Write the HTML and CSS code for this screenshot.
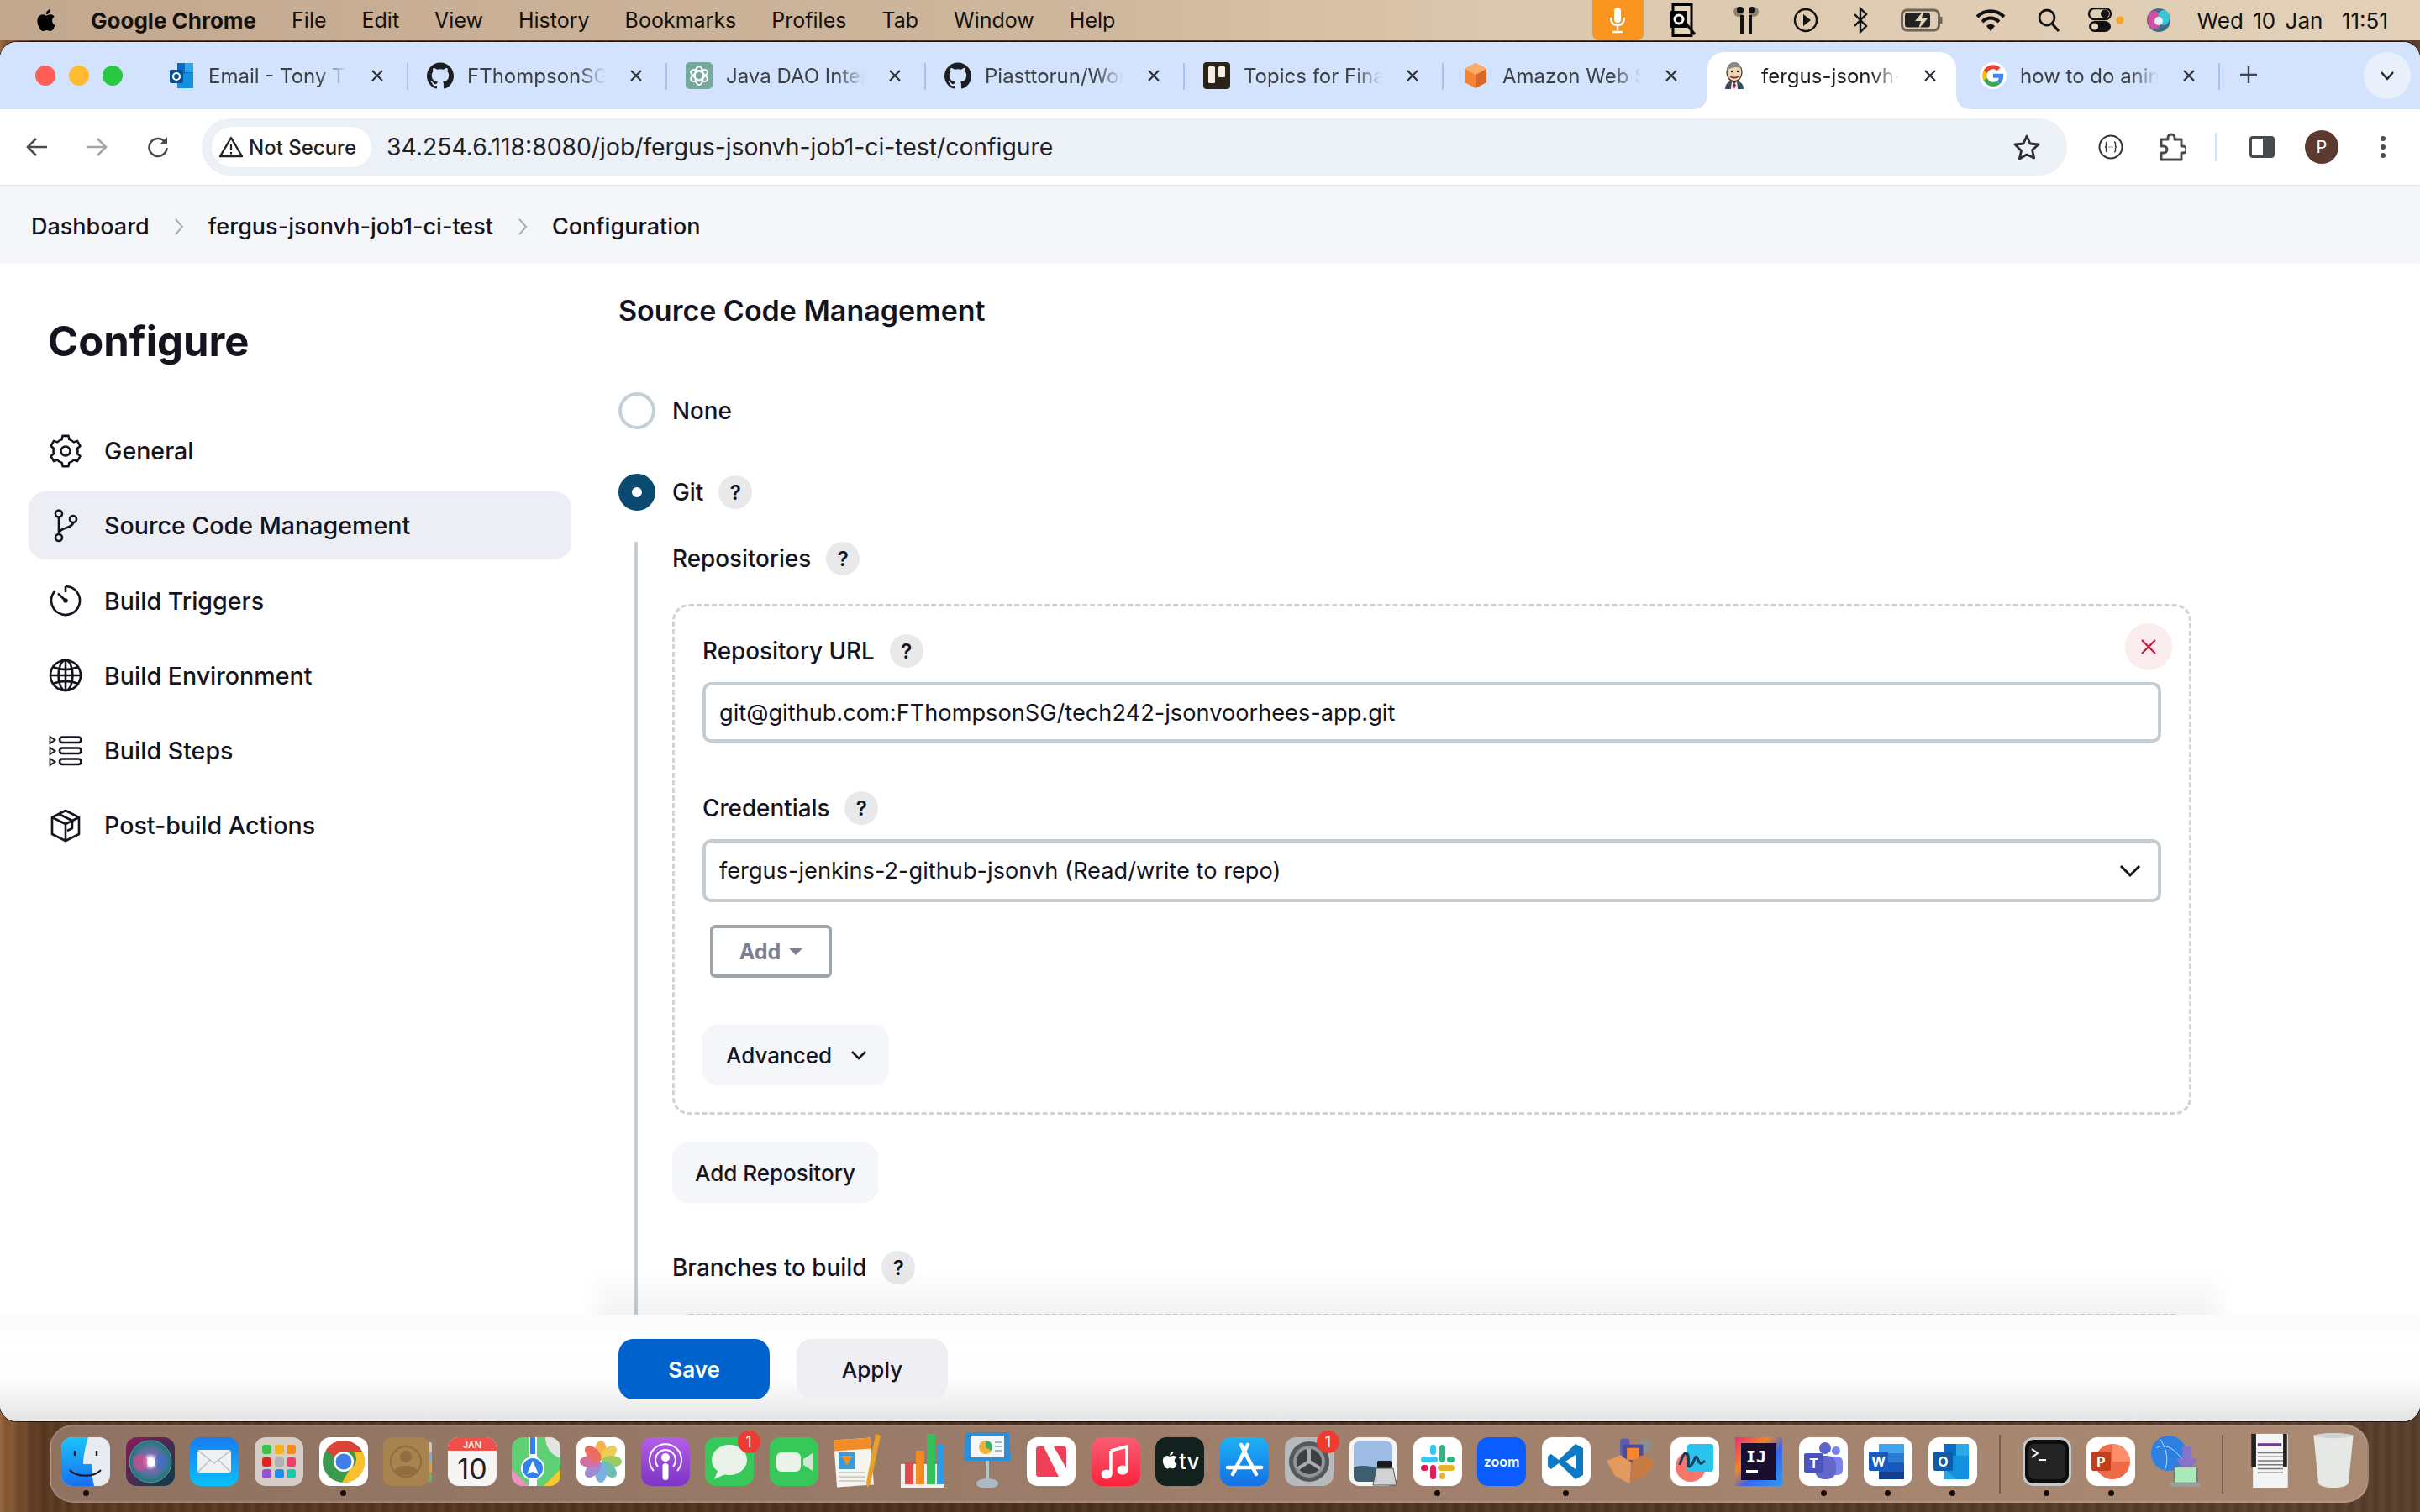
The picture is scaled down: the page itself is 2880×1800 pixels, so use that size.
FILE: index.html
```html
<!DOCTYPE html>
<html lang="en">
<head>
  <meta charset="UTF-8" />
  <meta name="viewport" content="width=device-width, initial-scale=1" />
  <title>fergus-jsonvh-job1-ci-test Config [Jenkins]</title>
  <link rel="stylesheet" href="styles.css">
</head>
<body>

<svg class="sprites" aria-hidden="true">
  <symbol id="github" viewBox="0 0 24 24"><path d="M12 .297c-6.63 0-12 5.373-12 12 0 5.303 3.438 9.8 8.205 11.385.6.113.82-.258.82-.577 0-.285-.01-1.04-.015-2.04-3.338.724-4.042-1.61-4.042-1.61C4.422 18.07 3.633 17.7 3.633 17.7c-1.087-.744.084-.729.084-.729 1.205.084 1.838 1.236 1.838 1.236 1.07 1.835 2.809 1.305 3.495.998.108-.776.417-1.305.76-1.605-2.665-.3-5.466-1.332-5.466-5.93 0-1.31.465-2.38 1.235-3.22-.135-.303-.54-1.523.105-3.176 0 0 1.005-.322 3.3 1.23.96-.267 1.98-.399 3-.405 1.02.006 2.04.138 3 .405 2.28-1.552 3.285-1.23 3.285-1.23.645 1.653.24 2.873.12 3.176.765.84 1.23 1.91 1.23 3.22 0 4.61-2.805 5.625-5.475 5.92.42.36.81 1.096.81 2.22 0 1.606-.015 2.896-.015 3.286 0 .315.21.69.825.57C20.565 22.092 24 17.592 24 12.297c0-6.627-5.373-12-12-12" fill="#1b1f24"/></symbol>
  <symbol id="x" viewBox="0 0 20 20"><path d="M4 4l12 12M16 4L4 16" fill="none" stroke="#2b2f36" stroke-width="2.2"/></symbol>
  <symbol id="crumb" viewBox="0 0 12 22"><path d="M2 2l8 9-8 9" fill="none" stroke="#a9acbb" stroke-width="2"/></symbol>
</svg>

<!-- macos menu bar -->
<div class="menubar">
  <div class="menu-left">
    <svg class="apple" viewBox="0 0 24 24"><path d="M12.152 6.896c-.948 0-2.415-1.078-3.96-1.04-2.04.027-3.91 1.183-4.961 3.014-2.117 3.675-.546 9.103 1.519 12.09 1.013 1.454 2.208 3.09 3.792 3.039 1.52-.065 2.09-.987 3.935-.987 1.831 0 2.35.987 3.96.948 1.637-.026 2.676-1.48 3.676-2.948 1.156-1.688 1.636-3.325 1.662-3.415-.039-.013-3.182-1.221-3.22-4.857-.026-3.04 2.48-4.494 2.597-4.559-1.429-2.09-3.623-2.324-4.39-2.376-2-.156-3.675 1.09-4.61 1.09zM15.53 3.83c.843-1.012 1.4-2.427 1.245-3.83-1.207.052-2.662.805-3.532 1.818-.78.896-1.454 2.338-1.273 3.714 1.338.104 2.715-.688 3.559-1.701"/></svg>
    <span class="menu-app">Google Chrome</span>
    <span>File</span><span>Edit</span><span>View</span><span>History</span><span>Bookmarks</span><span>Profiles</span><span>Tab</span><span>Window</span><span>Help</span>
  </div>
  <div class="menu-right">
    <div class="st st-mic"><svg width="20" height="32" viewBox="0 0 20 32"><rect x="6" y="1" width="8" height="18" rx="4" fill="#fff"/><path d="M2 13c0 6 3 9 8 9s8-3 8-9M10 22v6M4 30h12" fill="none" stroke="#fff" stroke-width="2.4"/></svg></div>
    <div class="st st-outlook"><svg width="34" height="40" viewBox="0 0 34 40"><rect x="5" y="1.500" width="22" height="37" fill="#e6d4bd" stroke="#000" stroke-width="3"/><rect x="2" y="9" width="20" height="20" fill="#000"/><circle cx="12" cy="19" r="5" fill="none" stroke="#fff" stroke-width="3"/><path d="M19 22l12 15" stroke="#000" stroke-width="3"/></svg></div>
    <div class="st st-pods"><svg width="40" height="36" viewBox="0 0 40 36"><circle cx="11" cy="8" r="6" fill="#8a8072"/><circle cx="29" cy="8" r="6" fill="#8a8072"/><circle cx="13" cy="6" r="4" fill="#111"/><circle cx="27" cy="6" r="4" fill="#111"/><path d="M15 12v22M25 12v22" stroke="#111" stroke-width="4"/></svg></div>
    <div class="st st-play"><svg width="30" height="30" viewBox="0 0 30 30"><circle cx="15" cy="15" r="13" fill="none" stroke="#111" stroke-width="2.4"/><path d="M12 8l9 7-9 7z" fill="#111"/></svg></div>
    <div class="st st-bt"><svg width="20" height="32" viewBox="0 0 20 32"><path d="M3 9l14 14-7 7V2l7 7L3 23" fill="none" stroke="#111" stroke-width="2.4"/></svg></div>
    <div class="st st-batt"><svg width="52" height="28" viewBox="0 0 52 28"><rect x="1.500" y="2" width="44" height="24" rx="6" fill="none" stroke="#6c6456" stroke-width="3"/><rect x="5" y="5.500" width="30" height="17" rx="3" fill="#222"/><path d="M48 10v8" stroke="#6c6456" stroke-width="3"/><path d="M27 3L17 15h7l-3 10 11-13h-7z" fill="#e6d4bd"/></svg></div>
    <div class="st st-wifi"><svg width="36" height="28" viewBox="0 0 36 28"><path d="M2 10c9-9 23-9 32 0M8 16c6-6 14-6 20 0" fill="none" stroke="#111" stroke-width="4"/><path d="M13 21c3-3 7-3 10 0l-5 6z" fill="#111"/></svg></div>
    <div class="st st-search"><svg width="28" height="30" viewBox="0 0 28 30"><circle cx="12" cy="12" r="9" fill="none" stroke="#111" stroke-width="2.800"/><path d="M18 19l8 9" stroke="#111" stroke-width="3"/></svg></div>
    <div class="st st-cc"><svg width="44" height="30" viewBox="0 0 44 30"><rect x="2" y="1" width="26" height="13" rx="6.500" fill="none" stroke="#111" stroke-width="2.400"/><circle cx="21" cy="7.500" r="5" fill="#111"/><rect x="2" y="16" width="26" height="13" rx="6.500" fill="#111"/><circle cx="9" cy="22.500" r="4" fill="#e6d4bd"/><circle cx="39" cy="15" r="4.500" fill="#f5a623"/></svg></div>
    <div class="st st-siri"><svg width="30" height="30" viewBox="0 0 30 30"><circle cx="15" cy="15" r="14" fill="#3d6d8a"/><ellipse cx="10" cy="15" rx="8" ry="11" fill="#d14fa5"/><ellipse cx="21" cy="12" rx="7" ry="9" fill="#3bc6d8"/><circle cx="15" cy="16" r="5" fill="#e8eaf5"/></svg></div>
    <span class="clock">Wed 10 Jan&nbsp; 11:51</span>
  </div>
</div>

<div class="window">

  <!-- tabs -->
  <div class="tabstrip">
    <div class="lights"><i class="red"></i><i class="yellow"></i><i class="green"></i></div>
    <div class="tab">
      <svg class="favicon" viewBox="0 0 32 32"><path d="M11 1h19v28H11z" fill="#0a6cc4"/><path d="M20 1h10v11H20z" fill="#29a8ea"/><path d="M11 15l19-3v19H11z" fill="#1490df"/><rect x="2" y="9" width="16" height="16" rx="2" fill="#0b4f93"/><circle cx="10" cy="17" r="4" fill="none" stroke="#fff" stroke-width="2.200"/></svg>
      <span class="tab-title">Email - Tony T</span>
      <svg class="tab-x"><use href="#x"/></svg>
    </div>
    <div class="tab">
      <svg class="favicon"><use href="#github"/></svg>
      <span class="tab-title">FThompsonSG</span>
      <svg class="tab-x"><use href="#x"/></svg>
    </div>
    <div class="tab">
      <svg class="favicon" viewBox="0 0 32 32"><rect width="32" height="32" rx="5" fill="#74aa9c"/><g fill="none" stroke="#fff" stroke-width="1.800"><ellipse cx="16" cy="16" rx="5" ry="11"/><ellipse cx="16" cy="16" rx="5" ry="11" transform="rotate(60 16 16)"/><ellipse cx="16" cy="16" rx="5" ry="11" transform="rotate(120 16 16)"/></g></svg>
      <span class="tab-title">Java DAO Inter</span>
      <svg class="tab-x"><use href="#x"/></svg>
    </div>
    <div class="tab">
      <svg class="favicon"><use href="#github"/></svg>
      <span class="tab-title">Piasttorun/Wor</span>
      <svg class="tab-x"><use href="#x"/></svg>
    </div>
    <div class="tab">
      <svg class="favicon" viewBox="0 0 32 32"><rect width="32" height="32" rx="4" fill="#2c2418"/><rect x="6" y="5" width="8" height="20" rx="1.500" fill="#f3efe6"/><rect x="18" y="5" width="8" height="13" rx="1.500" fill="#f3efe6"/></svg>
      <span class="tab-title">Topics for Fina</span>
      <svg class="tab-x"><use href="#x"/></svg>
    </div>
    <div class="tab">
      <svg class="favicon" viewBox="0 0 32 32"><path d="M16 1l13 7v16l-13 7-13-7V8z" fill="#f58536"/><path d="M16 15l13-7v16l-13 7z" fill="#d9672a"/><path d="M16 1l13 7-13 7-13-7z" fill="#fbab6a"/></svg>
      <span class="tab-title">Amazon Web S</span>
      <svg class="tab-x"><use href="#x"/></svg>
    </div>
    <div class="tab active">
      <svg class="favicon" viewBox="0 0 32 32"><path d="M5 32c0-7 5-10 11-10s11 3 11 10z" fill="#3b4a63"/><path d="M13 23l3 3 3-3 1 9h-8z" fill="#fff"/><path d="M16 25l2 2-2 5-2-5z" fill="#a6212f"/><ellipse cx="16" cy="12" rx="9" ry="11" fill="#f0d6b7" stroke="#4b3a30" stroke-width="1.300"/><path d="M7 10c1-7 5-10 9-10s8 3 9 8c-5-3-12-3-18 2z" fill="#8c8a86"/><circle cx="13" cy="11" r="1.200" fill="#222"/><circle cx="20" cy="11" r="1.200" fill="#222"/><path d="M11 17c3 2 7 2 10 0" fill="none" stroke="#7a2a22" stroke-width="1.600"/></svg>
      <span class="tab-title">fergus-jsonvh-</span>
      <svg class="tab-x"><use href="#x"/></svg>
    </div>
    <div class="tab last">
      <svg class="favicon" viewBox="-6 -6 60 60"><circle cx="24" cy="24" r="30" fill="#fff"/><path fill="#EA4335" d="M24 9.500c3.540 0 6.710 1.220 9.210 3.600l6.850-6.850C35.900 2.380 30.470 0 24 0 14.620 0 6.510 5.380 2.560 13.220l7.980 6.190C12.430 13.720 17.740 9.500 24 9.500z"/><path fill="#4285F4" d="M46.980 24.550c0-1.570-.15-3.090-.38-4.550H24v9.020h12.940c-.58 2.960-2.260 5.480-4.780 7.180l7.730 6c4.510-4.180 7.090-10.360 7.090-17.650z"/><path fill="#FBBC05" d="M10.530 28.590c-.48-1.450-.76-2.990-.76-4.590s.27-3.140.76-4.590l-7.980-6.190C.92 16.460 0 20.120 0 24c0 3.880.92 7.540 2.560 10.780l7.970-6.190z"/><path fill="#34A853" d="M24 48c6.480 0 11.930-2.130 15.890-5.810l-7.730-6c-2.150 1.450-4.920 2.300-8.160 2.300-6.260 0-11.570-4.220-13.460-9.910l-7.980 6.190C6.510 42.620 14.620 48 24 48z"/></svg>
      <span class="tab-title">how to do anin</span>
      <svg class="tab-x"><use href="#x"/></svg>
    </div>
    <svg class="newtab" viewBox="0 0 22 22"><path d="M11 1v20M1 11h20" stroke="#3c4650" stroke-width="2.400"/></svg>
    <div class="tabsearch"><svg width="18" height="12" viewBox="0 0 18 12"><path d="M2 2l7 8 7-8" fill="none" stroke="#1f2328" stroke-width="2.400"/></svg></div>
  </div>

  <!-- toolbar -->
  <div class="toolbar">
    <div class="tool t-back"><svg width="26" height="24" viewBox="0 0 26 24"><path d="M25 12H3M12 2L2 12l10 10" fill="none" stroke="#474b50" stroke-width="2.600"/></svg></div>
    <div class="tool t-fwd"><svg width="26" height="24" viewBox="0 0 26 24"><path d="M1 12h22M14 2l10 10-10 10" fill="none" stroke="#a2a5a9" stroke-width="2.600"/></svg></div>
    <div class="tool t-reload"><svg width="26" height="26" viewBox="0 0 26 26"><path d="M22 8a10.500 10.500 0 1 0 1.500 6" fill="none" stroke="#474b50" stroke-width="2.600"/><path d="M24 1v9h-9z" fill="#474b50"/></svg></div>
    <div class="omnibox">
      <div class="chip">
        <svg width="30" height="26" viewBox="0 0 30 26"><path d="M15 2L2 24h26z" fill="none" stroke="#1f2328" stroke-width="2.400" stroke-linejoin="round"/><path d="M15 10v7M15 19v2.500" stroke="#1f2328" stroke-width="2.200"/></svg>
        <span>Not Secure</span>
      </div>
      <span class="url">34.254.6.118:8080/job/fergus-jsonvh-job1-ci-test/configure</span>
      <svg class="star" viewBox="0 0 32 32"><path d="M16 3l4 9 10 1-7.500 6.500 2.200 9.500L16 25l-8.700 5 2.200-9.500L2 13l10-1z" fill="none" stroke="#2b2f36" stroke-width="2.800" stroke-linejoin="round"/></svg>
    </div>
    <div class="tool-right">
      <div class="tool t-json"><svg width="30" height="30" viewBox="0 0 30 30"><circle cx="15" cy="15" r="13.500" fill="none" stroke="#333" stroke-width="2"/><path d="M11 9c-2 0-1.500 2-1.500 4s-1 2-1.500 2c.500 0 1.500 0 1.500 2s-.5 4 1.500 4M19 9c2 0 1.500 2 1.500 4s1 2 1.500 2c-.5 0-1.500 0-1.500 2s.5 4-1.500 4" fill="none" stroke="#333" stroke-width="1.400"/><path d="M12.500 15h1M14.500 15h1M16.500 15h1" stroke="#333" stroke-width="1.200"/></svg></div>
      <div class="tool t-ext"><svg width="34" height="34" viewBox="0 0 34 34"><path d="M4 8h8V6a4 4 0 0 1 8 0v2h8v8h2a4 4 0 0 1 0 8h-2v8H4v-8h3a4 4 0 0 0 0-8H4z" fill="none" stroke="#474b50" stroke-width="3" stroke-linejoin="round"/></svg></div>
      <div class="tool t-sep"><i></i></div>
      <div class="tool t-side"><svg width="30" height="26" viewBox="0 0 30 26"><rect x="1.500" y="1.500" width="27" height="23" rx="2.500" fill="none" stroke="#474b50" stroke-width="3"/><rect x="16" y="1.500" width="12.500" height="23" fill="#474b50"/></svg></div>
      <div class="tool t-avatar"><span class="avatar">P</span></div>
      <div class="tool t-more"><svg width="8" height="28" viewBox="0 0 8 28"><circle cx="4" cy="4" r="3" fill="#474b50"/><circle cx="4" cy="14" r="3" fill="#474b50"/><circle cx="4" cy="24" r="3" fill="#474b50"/></svg></div>
    </div>
  </div>

  <!-- jenkins breadcrumb -->
  <div class="breadcrumb">
    <span>Dashboard</span>
    <svg class="crumb-sep"><use href="#crumb"/></svg>
    <span>fergus-jsonvh-job1-ci-test</span>
    <svg class="crumb-sep"><use href="#crumb"/></svg>
    <span>Configuration</span>
  </div>

  <div class="page">
    <aside class="sidebar">
      <h1>Configure</h1>
      <nav class="side-nav">
        <a class="side-item">
          <svg class="side-icon" viewBox="0 0 40 40"><path d="M15.760 6.130L16.470 1.840H23.530L24.240 6.130A14.500 14.500 0 0 1 29.890 9.400L33.960 7.860 37.490 13.980 34.130 16.740A14.500 14.500 0 0 1 34.130 23.260L37.490 26.020 33.960 32.140 29.890 30.600A14.500 14.500 0 0 1 24.240 33.870L23.530 38.160H16.470L15.760 33.870A14.500 14.500 0 0 1 10.110 30.600L6.040 32.140 2.510 26.020 5.870 23.260A14.500 14.500 0 0 1 5.870 16.740L2.510 13.980 6.040 7.860 10.110 9.400A14.500 14.500 0 0 1 15.760 6.130Z" stroke-linejoin="round"/><circle cx="20" cy="20" r="5.500"/></svg>
          General
        </a>
        <a class="side-item current">
          <svg class="side-icon" viewBox="0 0 40 40"><circle cx="12" cy="5.500" r="4"/><circle cx="12" cy="34" r="4"/><circle cx="29" cy="12" r="4"/><path d="M12 9.500V30M29 16c0 7-17 6-17 13"/></svg>
          Source Code Management
        </a>
        <a class="side-item">
          <svg class="side-icon" viewBox="0 0 40 40"><path d="M20 3a17 17 0 1 1-12.500 5.500"/><path d="M20 3v7M20.500 20.500L11 11.500"/><circle cx="20" cy="20" r="1.500"/></svg>
          Build Triggers
        </a>
        <a class="side-item">
          <svg class="side-icon" viewBox="0 0 40 40"><circle cx="20" cy="20" r="18"/><ellipse cx="20" cy="20" rx="8.500" ry="18"/><path d="M20 2v36M2 20h36M5 10c9 4 21 4 30 0M5 30c9-4 21-4 30 0"/></svg>
          Build Environment
        </a>
        <a class="side-item">
          <svg class="side-icon" viewBox="0 0 40 40"><path d="M1.500 3l6 4-6 4zM1.500 16l6 4-6 4zM1.500 29l6 4-6 4z" stroke-width="1.800"/><rect x="13" y="3.500" width="25.500" height="6.500" rx="3.200"/><rect x="13" y="16.500" width="25.500" height="6.500" rx="3.200"/><rect x="13" y="29.500" width="25.500" height="6.500" rx="3.200"/></svg>
          Build Steps
        </a>
        <a class="side-item">
          <svg class="side-icon" viewBox="0 0 40 40"><path d="M20 2l16 8v20l-16 8-16-8V10zM4 10l16 8 16-8M20 18v20M12 6l16 8v9l-6 3" stroke-linejoin="round"/></svg>
          Post-build Actions
        </a>
      </nav>
    </aside>

    <main class="config">
      <h2>Source Code Management</h2>

      <label class="radio-row none-row"><span class="radio"></span>None</label>
      <div class="radio-row git-row"><span class="radio checked"></span>Git <span class="help">?</span></div>

      <div class="git-block">
        <div class="field-label repos-label">Repositories <span class="help">?</span></div>

        <div class="repeat-box">
          <button class="remove-btn"><svg width="20" height="20" viewBox="0 0 20 20"><path d="M2 2l16 16M18 2L2 18" stroke="#d4123c" stroke-width="2.200"/></svg></button>

          <div class="field-label">Repository URL <span class="help">?</span></div>
          <input class="text-input" type="text" value="git@github.com:FThompsonSG/tech242-jsonvoorhees-app.git" />

          <div class="field-label cred-label">Credentials <span class="help">?</span></div>
          <div class="select-box">
            <span>fergus-jenkins-2-github-jsonvh (Read/write to repo)</span>
            <svg width="26" height="16" viewBox="0 0 26 16"><path d="M2 2l11 11L24 2" fill="none" stroke="#14141f" stroke-width="3"/></svg>
          </div>
          <button class="add-btn">Add <i class="caret"></i></button>
          <button class="soft-btn advanced-btn">Advanced <svg width="20" height="12" viewBox="0 0 20 12"><path d="M2 2l8 8 8-8" fill="none" stroke="#14141f" stroke-width="2.600"/></svg></button>
        </div>

        <button class="soft-btn add-repo-btn">Add Repository</button>

        <div class="field-label branches-label">Branches to build <span class="help">?</span></div>
        <div class="repeat-box branches-box"></div>
      </div>
    </main>

    <div class="bottom-bar">
      <button class="save-btn">Save</button>
      <button class="apply-btn">Apply</button>
    </div>
  </div>
</div>

<!-- macos dock -->
<div class="dock">
  <div class="slot on"><svg class="app" viewBox="0 0 58 58"><defs><linearGradient id="fing" x1="0" y1="0" x2="0" y2="1"><stop offset="0" stop-color="#19c3fb"/><stop offset="1" stop-color="#1a6ff0"/></linearGradient></defs><rect width="58" height="58" rx="13" fill="#e6ecf2"/><path d="M13 0H32C29 10 26 22 26 32H36C36 41 37 50 39 58H13A13 13 0 0 1 0 45V13A13 13 0 0 1 13 0z" fill="url(#fing)"/><path d="M16 16v6M42 16v6" stroke="#1a1a2a" stroke-width="2.400"/><path d="M10 39C18 48 39 48 47 39" fill="none" stroke="#1a1a2a" stroke-width="2"/></svg></div>
  <div class="slot"><svg class="app" viewBox="0 0 58 58"><defs><radialGradient id="sirig"><stop offset="0" stop-color="#fff"/><stop offset=".18" stop-color="#f4f0ff"/><stop offset=".4" stop-color="#7d6bb0"/><stop offset="1" stop-color="#1c7a7a"/></radialGradient><linearGradient id="sirib" x1="0" y1="0" x2="1" y2="1"><stop offset="0" stop-color="#8a1a5c"/><stop offset="1" stop-color="#0a3c48"/></linearGradient></defs><rect width="58" height="58" rx="13" fill="url(#sirib)"/><circle cx="29" cy="29" r="25" fill="url(#sirig)" stroke="#4aa2a2"/><ellipse cx="17" cy="30" rx="9" ry="10" fill="#d24a8c" opacity=".7"/><ellipse cx="42" cy="29" rx="8" ry="9" fill="#3f6dc4" opacity=".7"/><circle cx="30" cy="30" r="5" fill="#fff"/></svg></div>
  <div class="slot"><svg class="app" viewBox="0 0 58 58"><defs><linearGradient id="mailg" x1="0" y1="0" x2="0" y2="1"><stop offset="0" stop-color="#1a7bf0"/><stop offset="1" stop-color="#0ac0fb"/></linearGradient></defs><rect width="58" height="58" rx="13" fill="url(#mailg)"/><rect x="9" y="15" width="40" height="27" rx="3" fill="#eef0f2"/><path d="M10 16l19 15 19-15M10 41l14-14M48 41L34 27" fill="none" stroke="#b7bcc4" stroke-width="1.300"/></svg></div>
  <div class="slot"><svg class="app" viewBox="0 0 58 58"><rect width="58" height="58" rx="13" fill="#d6cdc6"/><rect x="9" y="9" width="11" height="11" rx="3" fill="#3ec24a"/><rect x="24" y="9" width="11" height="11" rx="3" fill="#f5b01f"/><rect x="38" y="9" width="11" height="11" rx="3" fill="#f58a1f"/><rect x="9" y="24" width="11" height="11" rx="3" fill="#e0231f"/><rect x="24" y="24" width="11" height="11" rx="3" fill="#a8b3b8"/><rect x="38" y="24" width="11" height="11" rx="3" fill="#ef3d6a"/><rect x="9" y="38" width="11" height="11" rx="3" fill="#9a4fd6"/><rect x="24" y="38" width="11" height="11" rx="3" fill="#1f8ef0"/><rect x="38" y="38" width="11" height="11" rx="3" fill="#1cc8a8"/></svg></div>
  <div class="slot on"><svg class="app" viewBox="0 0 58 58"><rect width="58" height="58" rx="13" fill="#fff"/><circle cx="29" cy="29" r="25" fill="#3a9b4c"/><path d="M29 4a25 25 0 0 1 22 13H29a12 12 0 0 0-11 7L8 15A25 25 0 0 1 29 4z" fill="#db4437"/><path d="M51 17a25 25 0 0 1-24 37l10-17a12 12 0 0 0 3-20z" fill="#fbc02d"/><circle cx="29" cy="29" r="12" fill="#fff"/><circle cx="29" cy="29" r="9.500" fill="#3f7ee8"/></svg></div>
  <div class="slot"><svg class="app" viewBox="0 0 58 58"><rect x="50" y="6" width="8" height="12" rx="2" fill="#c9c8c4"/><rect x="50" y="18" width="8" height="12" fill="#6fb3dc"/><rect x="50" y="30" width="8" height="12" fill="#e59a3b"/><rect x="50" y="42" width="8" height="11" rx="2" fill="#63b56a"/><rect width="55" height="58" rx="10" fill="#a9834f"/><circle cx="27" cy="29" r="18" fill="none" stroke="#8f6d3f" stroke-width="2"/><circle cx="27" cy="23" r="7" fill="#8f6d3f"/><path d="M13 40c4-8 24-8 28 0-6 7-22 7-28 0z" fill="#8f6d3f"/></svg></div>
  <div class="slot"><svg class="app" viewBox="0 0 58 58"><rect width="58" height="58" rx="13" fill="#f6f5f3"/><path d="M0 16V13A13 13 0 0 1 13 0h32a13 13 0 0 1 13 13v3z" fill="#f0504b"/><text class="cal-mon" x="29" y="13" text-anchor="middle">JAN</text><text class="cal-day" x="29" y="50" text-anchor="middle">10</text></svg></div>
  <div class="slot"><svg class="app" viewBox="0 0 58 58"><rect width="58" height="58" rx="13" fill="#5fd073"/><path d="M40 0h5a13 13 0 0 1 13 13v12C48 22 40 12 40 0z" fill="#e4e4e2"/><path d="M0 38l20 20H13A13 13 0 0 1 0 45z" fill="#ef8fc4"/><path d="M38 58l20-20v7a13 13 0 0 1-13 13z" fill="#f7c92f"/><path d="M20 0h10v58H20z" fill="#fafafa"/><path d="M22 0h6v20h-6z" fill="#2f82ea"/><circle cx="25" cy="37" r="13" fill="#2f82ea" stroke="#fff" stroke-width="2"/><path d="M25 28l7 16-7-3-7 3z" fill="#fff"/></svg></div>
  <div class="slot"><svg class="app" viewBox="0 0 58 58"><rect width="58" height="58" rx="13" fill="#fff"/><g opacity=".82"><ellipse cx="29" cy="16" rx="7" ry="12" fill="#f5a02a"/><ellipse cx="29" cy="16" rx="7" ry="12" fill="#e9c22e" transform="rotate(45 29 29)"/><ellipse cx="29" cy="16" rx="7" ry="12" fill="#88bf42" transform="rotate(90 29 29)"/><ellipse cx="29" cy="16" rx="7" ry="12" fill="#4fb3a2" transform="rotate(135 29 29)"/><ellipse cx="29" cy="16" rx="7" ry="12" fill="#5f9fe0" transform="rotate(180 29 29)"/><ellipse cx="29" cy="16" rx="7" ry="12" fill="#8a72c8" transform="rotate(225 29 29)"/><ellipse cx="29" cy="16" rx="7" ry="12" fill="#c9508f" transform="rotate(270 29 29)"/><ellipse cx="29" cy="16" rx="7" ry="12" fill="#ea4c3f" transform="rotate(315 29 29)"/></g></svg></div>
  <div class="slot"><svg class="app" viewBox="0 0 58 58"><defs><linearGradient id="podg" x1="0" y1="0" x2="0" y2="1"><stop offset="0" stop-color="#b45fe8"/><stop offset="1" stop-color="#7c35c4"/></linearGradient></defs><rect width="58" height="58" rx="13" fill="url(#podg)"/><g fill="none" stroke="#fff" stroke-width="2"><path d="M15 40a19 19 0 1 1 28 0"/><path d="M20 35a12 12 0 1 1 18 0"/></g><circle cx="29" cy="24" r="5" fill="#fff"/><rect x="25.500" y="31" width="7" height="20" rx="3.500" fill="#fff"/></svg></div>
  <div class="slot"><svg class="app" viewBox="0 0 58 58"><rect width="58" height="58" rx="13" fill="#36c95a"/><ellipse cx="29" cy="27" rx="21" ry="18" fill="#e9f3e9"/><path d="M16 38l-5 12 13-6z" fill="#e9f3e9"/></svg><span class="badge">1</span></div>
  <div class="slot"><svg class="app" viewBox="0 0 58 58"><rect width="58" height="58" rx="13" fill="#36c95a"/><rect x="8" y="18" width="29" height="23" rx="6" fill="#e9f3e9"/><path d="M40 26l11-7v21l-11-7z" fill="#cfe8cf"/></svg></div>
  <div class="slot"><svg class="app tall" viewBox="0 0 58 68"><rect x="2" y="8" width="44" height="56" fill="#f6f5f0" transform="rotate(-4 24 36)"/><rect x="2" y="8" width="44" height="13" fill="#f28c28" transform="rotate(-4 24 36)"/><rect x="6" y="24" width="20" height="20" fill="#3c9ad8"/><path d="M10 28l6 12 6-12z" fill="#f5901f"/><path d="M6 48h32M6 53h32M6 58h32" stroke="#aaa" stroke-width="1"/><path d="M50 2l6 2-12 58-4 4-1-6z" fill="#e6a12a"/></svg></div>
  <div class="slot"><svg class="app tall" viewBox="0 0 58 68"><path d="M3 38h52v28H3z" fill="#f1f1ef"/><rect x="8" y="36" width="10" height="26" fill="#e64a4a"/><rect x="21" y="22" width="10" height="40" fill="#f58b1f"/><rect x="34" y="2" width="10" height="60" fill="#37c15c"/><rect x="46" y="14" width="9" height="48" fill="#2f9be6"/></svg></div>
  <div class="slot"><svg class="app tall" viewBox="0 0 58 68"><path d="M3 0h52l2 34H1z" fill="#2e8fd8"/><path d="M9 4h40v26H9z" fill="#f3f7fa"/><circle cx="27" cy="18" r="8" fill="#f2b134"/><path d="M27 18V10a8 8 0 0 1 7 12z" fill="#38b36a"/><path d="M38 12h8M38 17h8M38 22h8" stroke="#8aa" stroke-width="1.500"/><rect x="27" y="34" width="4" height="26" fill="#b8c6d0"/><ellipse cx="29" cy="61" rx="13" ry="6" fill="#a9bac6"/></svg></div>
  <div class="slot"><svg class="app" viewBox="0 0 58 58"><rect width="58" height="58" rx="13" fill="#fff"/><rect x="11" y="11" width="36" height="36" rx="3" fill="#ef4056"/><path d="M20 11h12l15 26V47H38z" fill="#fff"/></svg></div>
  <div class="slot"><svg class="app" viewBox="0 0 58 58"><defs><linearGradient id="musg" x1="0" y1="0" x2="0" y2="1"><stop offset="0" stop-color="#fb5c74"/><stop offset="1" stop-color="#fa233b"/></linearGradient></defs><rect width="58" height="58" rx="13" fill="url(#musg)"/><path d="M23 16l19-5v28" fill="none" stroke="#fff" stroke-width="3.500"/><path d="M23 16v28" stroke="#fff" stroke-width="3.500"/><ellipse cx="18" cy="44" rx="6.500" ry="5.500" fill="#fff"/><ellipse cx="37" cy="39" rx="6.500" ry="5.500" fill="#fff"/></svg></div>
  <div class="slot"><svg class="app" viewBox="0 0 58 58"><rect width="58" height="58" rx="13" fill="#13211e"/><path transform="translate(7 17) scale(.85)" fill="#fff" d="M12.152 6.896c-.948 0-2.415-1.078-3.960-1.040-2.040.027-3.910 1.183-4.961 3.014-2.117 3.675-.546 9.103 1.519 12.090 1.013 1.454 2.208 3.090 3.792 3.039 1.520-.065 2.090-.987 3.935-.987 1.831 0 2.350.987 3.960.948 1.637-.026 2.676-1.480 3.676-2.948 1.156-1.688 1.636-3.325 1.662-3.415-.039-.013-3.182-1.221-3.220-4.857-.026-3.040 2.480-4.494 2.597-4.559-1.429-2.090-3.623-2.324-4.390-2.376-2-.156-3.675 1.090-4.610 1.090zM15.530 3.830c.843-1.012 1.400-2.427 1.245-3.830-1.207.052-2.662.805-3.532 1.818-.780.896-1.454 2.338-1.273 3.714 1.338.104 2.715-.688 3.559-1.701"/><text class="tv-label" x="28" y="38">tv</text></svg></div>
  <div class="slot"><svg class="app" viewBox="0 0 58 58"><defs><linearGradient id="appg" x1="0" y1="0" x2="0" y2="1"><stop offset="0" stop-color="#1cb2f5"/><stop offset="1" stop-color="#1470e6"/></linearGradient></defs><rect width="58" height="58" rx="13" fill="url(#appg)"/><path d="M33 9L15 44M25 9l18 35M9 36h40" stroke="#fff" stroke-width="4.500" stroke-linecap="round"/></svg></div>
  <div class="slot"><svg class="app" viewBox="0 0 58 58"><rect width="58" height="58" rx="13" fill="#b6babc"/><circle cx="29" cy="29" r="24" fill="#55595c"/><circle cx="29" cy="29" r="19" fill="#8f9496"/><circle cx="29" cy="29" r="15" fill="#3d4043"/><path d="M29 29V14M29 29l13 8M29 29l-13 8" stroke="#a9adaf" stroke-width="4"/></svg><span class="badge">1</span></div>
  <div class="slot"><svg class="app" viewBox="0 0 58 58"><rect width="58" height="58" rx="13" fill="#f5f4f1"/><rect x="6" y="5" width="46" height="48" rx="6" fill="#9fbce4"/><path d="M6 36c12-5 30 0 46 6v5a6 6 0 0 1-6 6H12a6 6 0 0 1-6-6z" fill="#3f5d70"/><rect x="34" y="28" width="18" height="9" rx="2" fill="#1a1a1a"/><path d="M33 37h20l4 20H29z" fill="#cfd3d4" stroke="#555"/></svg></div>
  <div class="slot on"><svg class="app" viewBox="0 0 58 58"><rect width="58" height="58" rx="13" fill="#fff"/><rect x="9" y="23" width="20" height="7" rx="3.500" fill="#36c5f0"/><rect x="20" y="9" width="7" height="12" rx="3.500" fill="#36c5f0"/><rect x="31" y="9" width="7" height="21" rx="3.500" fill="#2eb67d"/><rect x="40" y="23" width="9" height="7" rx="3.500" fill="#2eb67d"/><rect x="29" y="33" width="20" height="7" rx="3.500" fill="#ecb22e"/><rect x="31" y="42" width="7" height="8" rx="3.500" fill="#ecb22e"/><rect x="20" y="33" width="7" height="17" rx="3.500" fill="#e01e5a"/><rect x="9" y="33" width="9" height="7" rx="3.500" fill="#e01e5a"/></svg></div>
  <div class="slot"><svg class="app" viewBox="0 0 58 58"><rect width="58" height="58" rx="13" fill="#0b5cff"/><text class="zoom-label" x="29" y="35" text-anchor="middle">zoom</text></svg></div>
  <div class="slot on"><svg class="app" viewBox="0 0 58 58"><rect width="58" height="58" rx="13" fill="#fff"/><path d="M40 8l9 5v32l-9 5-20-19-9 7-4-3V23l4-3 9 7zm0 13L28 29l12 9z" fill="#0e7ac4"/></svg></div>
  <div class="slot"><svg class="app tall" viewBox="0 0 72 68"><circle cx="56" cy="12" r="10" fill="#8b8d90"/><rect x="20" y="1" width="14" height="26" rx="5" fill="#5560b0"/><rect x="24" y="10" width="30" height="30" fill="#4e4a9c"/><rect x="30" y="15" width="18" height="18" fill="#f5862a"/><path d="M0 34l20-8 16 10-2 32-22-12z" fill="#e29a5f"/><path d="M72 34l-20-8-16 10 2 30 22-12z" fill="#c77b45"/></svg></div>
  <div class="slot"><svg class="app" viewBox="0 0 58 58"><rect width="58" height="58" rx="13" fill="#fff"/><circle cx="24" cy="35" r="18" fill="#f7756a"/><rect x="20" y="8" width="31" height="33" rx="4" fill="#29c4ee"/><path d="M11 33c4-14 8-18 10-11s-2 16 3 12 5-15 8-9 3 9 9 3" fill="none" stroke="#10405c" stroke-width="3"/></svg></div>
  <div class="slot"><svg class="app" viewBox="0 0 58 58"><defs><linearGradient id="ijg" x1="0" y1="0" x2="1" y2="1"><stop offset="0" stop-color="#f5277a"/><stop offset=".35" stop-color="#f7851c"/><stop offset=".6" stop-color="#3a63f0"/><stop offset="1" stop-color="#2d9bf0"/></linearGradient></defs><rect width="56" height="58" fill="url(#ijg)"/><rect x="7" y="7" width="42" height="44" fill="#1a0f2e"/><text class="ij-label" x="13" y="30">IJ</text><rect x="13" y="39" width="14" height="3" fill="#fff"/></svg></div>
  <div class="slot on"><svg class="app" viewBox="0 0 58 58"><rect width="58" height="58" rx="13" fill="#fff"/><circle cx="44" cy="16" r="5" fill="#7b83eb"/><rect x="36" y="23" width="16" height="22" rx="6" fill="#7b83eb"/><circle cx="31" cy="13" r="7" fill="#5d64c9"/><rect x="19" y="22" width="25" height="28" rx="10" fill="#6268c9"/><rect x="6" y="19" width="23" height="23" rx="2" fill="#4b53bc"/><text class="office-label" x="17.500" y="37" text-anchor="middle">T</text></svg></div>
  <div class="slot on"><svg class="app" viewBox="0 0 58 58"><rect width="58" height="58" rx="13" fill="#fff"/><path d="M18 8h28a2 2 0 0 1 2 2v38a2 2 0 0 1-2 2H18z" fill="#2b7cd3"/><rect x="18" y="8" width="30" height="11" fill="#41a5ee"/><rect x="18" y="30" width="30" height="11" fill="#185abd"/><rect x="18" y="41" width="30" height="9" fill="#103f91"/><rect x="6" y="17" width="23" height="23" rx="2" fill="#185abd"/><text class="office-label" x="17.500" y="35" text-anchor="middle">W</text></svg></div>
  <div class="slot on"><svg class="app" viewBox="0 0 58 58"><rect width="58" height="58" rx="13" fill="#fff"/><rect x="18" y="8" width="30" height="14" fill="#0a6cc4"/><rect x="33" y="8" width="15" height="14" fill="#29a8ea"/><path d="M18 22h30v28H18z" fill="#1490df"/><path d="M18 36l15 14H18z" fill="#28a8ea"/><rect x="6" y="17" width="23" height="23" rx="2" fill="#0f5ba8"/><text class="office-label" x="17.500" y="35" text-anchor="middle">O</text></svg></div>
  <div class="dock-sep"></div>
  <div class="slot on"><svg class="app" viewBox="0 0 58 58"><rect width="58" height="58" rx="13" fill="#c4c8ca"/><rect x="3" y="3" width="52" height="52" rx="10" fill="#0c0c0c"/><rect x="7" y="8" width="44" height="42" rx="6" fill="#242424"/><path d="M11 14l7 5-7 5" fill="none" stroke="#fff" stroke-width="2"/><path d="M20 27h8" stroke="#fff" stroke-width="2"/></svg></div>
  <div class="slot on"><svg class="app" viewBox="0 0 58 58"><rect width="58" height="58" rx="13" fill="#fff"/><circle cx="31" cy="29" r="21" fill="#ed6c47"/><path d="M31 8a21 21 0 0 1 21 21H31z" fill="#ff8f6b"/><rect x="6" y="17" width="23" height="23" rx="2" fill="#c43e1c"/><text class="office-label" x="17.500" y="35" text-anchor="middle">P</text></svg></div>
  <div class="slot"><svg class="app tall" viewBox="0 0 72 78"><circle cx="26" cy="28" r="26" fill="#2d7fe0"/><path d="M8 20c14-8 28 2 40 20M14 8c10 16 12 30 6 46" fill="none" stroke="#bfe0fa" stroke-width="1.200"/><path d="M46 18h14v18h9L53 60 37 36h9z" fill="#8a72c8"/><rect x="34" y="48" width="34" height="24" fill="#a9eab8" stroke="#777" stroke-width="2"/><rect x="28" y="72" width="44" height="5" fill="#9a9ea0"/></svg></div>
  <div class="dock-sep"></div>
  <div class="slot"><svg class="app tall" viewBox="0 0 58 72"><rect x="8" y="2" width="44" height="68" fill="#f4f4f4"/><rect x="6" y="2" width="6" height="42" fill="#222"/><rect x="46" y="2" width="5" height="42" fill="#222"/><rect x="14" y="14" width="30" height="4" fill="#6c3d8f"/><path d="M14 26h32M14 31h32M14 36h32M14 41h32M14 46h32M14 51h32" stroke="#777" stroke-width="1.500"/></svg></div>
  <div class="slot"><svg class="app tall" viewBox="0 0 58 72"><path d="M4 4c14-4 36-4 50 0l-6 60c-2 8-36 8-38 0z" fill="#e6e8e6"/><path d="M4 4c14-4 36-4 50 0-14 5-36 5-50 0z" fill="#cfd2d0"/></svg></div>
</div>

</body>
</html>
```

FILE: styles.css
```css
* {
  box-sizing: border-box;
}
html, body {
  margin: 0;
  height: 100%;
}
body {
  width: 2880px;
  height: 1800px;
  overflow: hidden;
  display: flex;
  flex-direction: column;
  font-family: 'Inter', 'Liberation Sans', sans-serif;
  color: #14141f;
  background:
    repeating-linear-gradient(90deg, rgba(255,230,200,0.05) 0, rgba(0,0,0,0.08) 7px, rgba(255,230,200,0.03) 15px),
    linear-gradient(90deg, #94633a 0, #5c3920 45px, #4b2f1c 1200px, #5a3f2c 2880px);
}
.sprites {
  position: absolute;
  width: 0;
  height: 0;
}

/* menu bar */
.menubar {
  height: 48px;
  flex: none;
  display: flex;
  justify-content: space-between;
  background: linear-gradient(90deg, #c2a88e, #cfb79d 45%, #dcc8ae 62%, #e2d0b8);
  font-size: 25px;
  color: #14110d;
}
.menu-left {
  display: flex;
  align-items: center;
  gap: 42px;
  padding-left: 42px;
}
.apple {
  width: 26px;
  height: 32px;
  margin-right: -2px;
}
.menu-app {
  font-weight: 700;
  font-size: 26px;
}
.menu-right {
  display: flex;
  align-items: center;
  padding-right: 38px;
}
.st {
  height: 48px;
  display: flex;
  align-items: center;
  justify-content: center;
}
.st-mic {
  width: 61px;
  background: #f9941e;
  border-radius: 0 0 8px 8px;
}
.st-outlook { width: 94px; }
.st-pods { width: 56px; }
.st-play { width: 86px; }
.st-bt { width: 44px; }
.st-batt { width: 104px; }
.st-wifi { width: 58px; }
.st-search { width: 80px; }
.st-cc { width: 56px; }
.st-siri { width: 70px; }
.clock {
  margin-left: 11px;
  font-size: 26px;
  word-spacing: 4px;
  white-space: nowrap;
}

/* browser window */
.window {
  margin-top: 2px;
  height: 1642px;
  flex: none;
  display: flex;
  flex-direction: column;
  overflow: hidden;
  background: #fff;
  border-radius: 20px;
  box-shadow: 0 0 0 1px rgba(0,0,0,0.6);
}
.tabstrip {
  height: 80px;
  flex: none;
  display: flex;
  align-items: flex-end;
  background: #d3e3fd;
}
.lights {
  width: 178px;
  height: 80px;
  flex: none;
  display: flex;
  align-items: center;
  gap: 16px;
  padding-left: 42px;
}
.lights i {
  width: 24px;
  height: 24px;
  border-radius: 50%;
}
.lights .red { background: #ff5f57; }
.lights .yellow { background: #febc2e; }
.lights .green { background: #28c840; }
.tab {
  width: 308px;
  height: 68px;
  flex: none;
  display: flex;
  align-items: center;
  padding: 0 0 12px 22px;
  position: relative;
  font-size: 24px;
  color: #3c4043;
}
.tab > * {
  position: relative;
}
.tab::after {
  content: "";
  position: absolute;
  right: 0;
  top: 13px;
  width: 2px;
  height: 32px;
  background: #a8c4ec;
}
.tab.active {
  color: #1f1f1f;
}
.tab.active::before {
  content: "";
  position: absolute;
  top: 0;
  bottom: 0;
  left: 6px;
  right: 6px;
  background: #fff;
  border-radius: 20px 20px 0 0;
}
/* the little flared corners at the foot of the active tab */
.tab.active::after {
  left: -10px;
  right: -10px;
  top: auto;
  bottom: 0;
  width: auto;
  height: 16px;
  background:
    radial-gradient(circle at 0 0, #d3e3fd 15.500px, #fff 16px) left bottom / 16px 16px no-repeat,
    radial-gradient(circle at 100% 0, #d3e3fd 15.500px, #fff 16px) right bottom / 16px 16px no-repeat;
}
.tab:nth-child(7)::after {
  display: none;
}
.favicon {
  width: 32px;
  height: 32px;
  flex: none;
}
.tab-title {
  margin-left: 16px;
  width: 168px;
  white-space: nowrap;
  -webkit-mask-image: linear-gradient(90deg, #000 78%, transparent 98%);
  mask-image: linear-gradient(90deg, #000 78%, transparent 98%);
}
.tab-x {
  width: 20px;
  height: 20px;
  margin-left: 23px;
  flex: none;
}
.newtab {
  width: 22px;
  height: 22px;
  margin: 0 0 30px 23px;
  flex: none;
}
.tabsearch {
  width: 56px;
  height: 56px;
  margin: 0 0 12px 126px;
  flex: none;
  display: flex;
  align-items: center;
  justify-content: center;
  background: #e9f0fc;
  border-radius: 50%;
}

/* toolbar */
.toolbar {
  height: 92px;
  flex: none;
  display: flex;
  align-items: center;
  padding-left: 8px;
  background: #fff;
  border-bottom: 2px solid #e4e5e7;
}
.tool {
  display: flex;
  align-items: center;
  justify-content: center;
  height: 60px;
  flex: none;
}
.t-back { width: 72px; }
.t-fwd { width: 70px; }
.t-reload { width: 76px; }
.omnibox {
  width: 2220px;
  height: 68px;
  margin-left: 14px;
  flex: none;
  display: flex;
  align-items: center;
  padding: 0 32px 0 12px;
  background: #ecf0f7;
  border-radius: 34px;
}
.chip {
  width: 190px;
  height: 48px;
  display: flex;
  align-items: center;
  gap: 6px;
  padding-left: 8px;
  background: #fff;
  border-radius: 24px;
  font-size: 24px;
  font-weight: 500;
  color: #1f2328;
  white-space: nowrap;
}
.url {
  margin-left: 18px;
  flex: 1;
  font-size: 28.300px;
  color: #1f2328;
  white-space: nowrap;
}
.star {
  width: 32px;
  height: 32px;
}
.tool-right {
  display: flex;
  align-items: center;
}
.t-json { width: 104px; }
.t-ext { width: 42px; }
.t-sep { width: 62px; }
.t-sep i {
  width: 3px;
  height: 34px;
  background: #d3e3fd;
}
.t-side { width: 48px; }
.t-avatar { width: 94px; }
.t-more { width: 52px; }
.avatar {
  width: 40px;
  height: 40px;
  border-radius: 50%;
  background: #5d3a30;
  color: #fff;
  font-size: 20px;
  display: flex;
  align-items: center;
  justify-content: center;
}

/* jenkins */
.breadcrumb {
  height: 92px;
  flex: none;
  display: flex;
  align-items: center;
  padding: 3px 0 0 37px;
  background: #f5f6f9;
  font-size: 27px;
  font-weight: 500;
}
.crumb-sep {
  width: 12px;
  height: 22px;
  margin: 0 29px;
  flex: none;
}
.page {
  flex: 1;
  display: flex;
  position: relative;
  overflow: hidden;
}
.sidebar {
  width: 736px;
  flex: none;
  padding: 56px 0 0 34px;
}
.sidebar h1 {
  margin: 0 0 52px 23px;
  font-size: 49px;
  line-height: 74px;
  font-weight: 700;
}
.side-nav {
  width: 646px;
  display: flex;
  flex-direction: column;
  gap: 8.300px;
}
.side-item {
  height: 81px;
  display: flex;
  align-items: center;
  gap: 26px;
  padding-left: 24px;
  border-radius: 20px;
  font-size: 28.600px;
  font-weight: 500;
}
.side-item.current {
  background: #edeef4;
}
.side-icon {
  width: 40px;
  height: 40px;
  flex: none;
  fill: none;
  stroke: #14141f;
  stroke-width: 2.600;
}
.config {
  flex: 1;
  padding-top: 34px;
}
.config h2 {
  margin: 0 0 75px;
  font-size: 34px;
  line-height: 44px;
  font-weight: 600;
}
.radio-row {
  height: 44px;
  display: flex;
  align-items: center;
  font-size: 27.800px;
  font-weight: 500;
}
.git-row {
  margin-top: 53px;
}
.radio {
  width: 44px;
  height: 44px;
  margin-right: 20px;
  border: 4px solid #c5cfd6;
  border-radius: 50%;
  background: #fff;
  flex: none;
}
.radio.checked {
  border: 16px solid #0b4a70;
}
.help {
  width: 40px;
  height: 40px;
  margin-left: 18px;
  border-radius: 50%;
  background: #e9e9eb;
  display: inline-flex;
  align-items: center;
  justify-content: center;
  font-size: 24px;
  font-weight: 600;
  flex: none;
}
.git-block {
  margin: 37px 0 0 19px;
  padding-left: 41px;
  border-left: 4px solid #c5cfd6;
}
.field-label {
  height: 40px;
  display: flex;
  align-items: center;
  font-size: 27.800px;
  font-weight: 500;
}
.repeat-box {
  width: 1808px;
  margin-top: 34px;
  padding: 33px 33px 32px;
  border: 3px dashed #cdd3d8;
  border-radius: 20px;
  position: relative;
}
.remove-btn {
  position: absolute;
  top: 20px;
  right: 20px;
  width: 56px;
  height: 56px;
  border: none;
  border-radius: 50%;
  background: #fbeced;
  display: flex;
  align-items: center;
  justify-content: center;
  padding: 0;
}
.text-input,
.select-box {
  display: flex;
  align-items: center;
  width: 100%;
  margin-top: 17px;
  padding: 0 16px;
  border: 4px solid #c3ccd1;
  border-radius: 10px;
  background: #fff;
  font-family: inherit;
  font-size: 27.200px;
  color: #14141f;
}
.text-input {
  height: 72px;
}
.select-box {
  height: 75px;
  justify-content: space-between;
  padding-right: 20px;
}
.cred-label {
  margin-top: 58px;
}
.add-btn {
  display: flex;
  align-items: center;
  justify-content: center;
  gap: 10px;
  width: 145px;
  height: 63px;
  margin: 27px 0 0 9px;
  border: 4px solid #9aa5ae;
  border-radius: 6px;
  background: #fff;
  font-family: inherit;
  font-size: 25px;
  font-weight: 700;
  color: #7d7f96;
}
.caret {
  width: 0;
  height: 0;
  border: 8px solid transparent;
  border-top-color: #7d7f96;
  border-bottom: none;
}
.soft-btn {
  display: flex;
  align-items: center;
  height: 72px;
  border: none;
  border-radius: 18px;
  background: #f5f6f9;
  font-family: inherit;
  font-size: 26px;
  font-weight: 500;
  color: #14141f;
}
.advanced-btn {
  width: 222px;
  margin-top: 56px;
  padding: 0 0 0 28px;
  gap: 22px;
}
.add-repo-btn {
  width: 245px;
  margin-top: 33px;
  justify-content: center;
  padding: 0;
}
.branches-label {
  margin-top: 57px;
}
.repeat-box.branches-box {
  margin-top: 35px;
  height: 300px;
}
.bottom-bar {
  position: absolute;
  left: 0;
  right: 0;
  bottom: 0;
  height: 127px;
  display: flex;
  gap: 32px;
  padding: 29px 0 0 736px;
  background: linear-gradient(180deg, #fbfbfc 0, #fff 30%, #fdfdfd 62%, #e4e4e5 100%);
}
/* soft shade the bar throws on the page above it */
.bottom-bar::before {
  content: "";
  position: absolute;
  left: 690px;
  right: 220px;
  bottom: 100%;
  height: 56px;
  background: linear-gradient(180deg, rgba(0,0,0,0), rgba(0,0,0,0.05));
  -webkit-mask-image: linear-gradient(90deg, transparent, #000 40px, #000 calc(100% - 40px), transparent);
  mask-image: linear-gradient(90deg, transparent, #000 40px, #000 calc(100% - 40px), transparent);
}
.save-btn,
.apply-btn {
  width: 180px;
  height: 72px;
  border: none;
  border-radius: 18px;
  font-family: inherit;
  font-size: 26px;
  font-weight: 600;
}
.save-btn {
  background: #0062cc;
  color: #fff;
}
.apply-btn {
  background: #eeeef3;
  color: #14141f;
  font-weight: 500;
}

/* dock */
.dock {
  height: 93px;
  width: 2760px;
  margin: 4px 0 0 59px;
  flex: none;
  display: flex;
  padding: 13px 0 0 3px;
  border: 2px solid rgba(255,255,255,0.12);
  border-radius: 28px;
  background: linear-gradient(90deg, #8f7261, #9e7e6b 50%, #aa8a72);
}
.slot {
  width: 76.600px;
  height: 70px;
  flex: none;
  display: flex;
  justify-content: center;
  position: relative;
}
.app {
  width: 58px;
  height: 58px;
  flex: none;
}
.app.tall {
  height: 68px;
  margin-top: -6px;
}
.slot.on::after {
  content: "";
  position: absolute;
  left: 50%;
  top: 63px;
  width: 7px;
  height: 7px;
  margin-left: -3.500px;
  border-radius: 50%;
  background: #1a0a06;
}
.badge {
  position: absolute;
  top: -8px;
  right: 2px;
  width: 27px;
  height: 27px;
  border-radius: 50%;
  background: #ee3a33;
  color: #fff;
  font-size: 18px;
  display: flex;
  align-items: center;
  justify-content: center;
}
.dock-sep {
  width: 35.500px;
  height: 70px;
  flex: none;
  position: relative;
}
.dock-sep::after {
  content: "";
  position: absolute;
  left: 17px;
  top: -3px;
  width: 2px;
  height: 70px;
  background: #7c5d4b;
}
.cal-mon {
  font-size: 11px;
  font-weight: 500;
  fill: #fff;
}
.cal-day {
  font-size: 34px;
  fill: #222;
}
.tv-label {
  font-size: 26px;
  font-weight: 500;
  fill: #fff;
}
.zoom-label {
  font-size: 16px;
  font-weight: 600;
  fill: #fff;
}
.ij-label {
  font-family: 'DejaVu Sans Mono', monospace;
  font-size: 20px;
  font-weight: 700;
  fill: #fff;
}
.office-label {
  font-size: 16px;
  font-weight: 700;
  fill: #fff;
}
```
